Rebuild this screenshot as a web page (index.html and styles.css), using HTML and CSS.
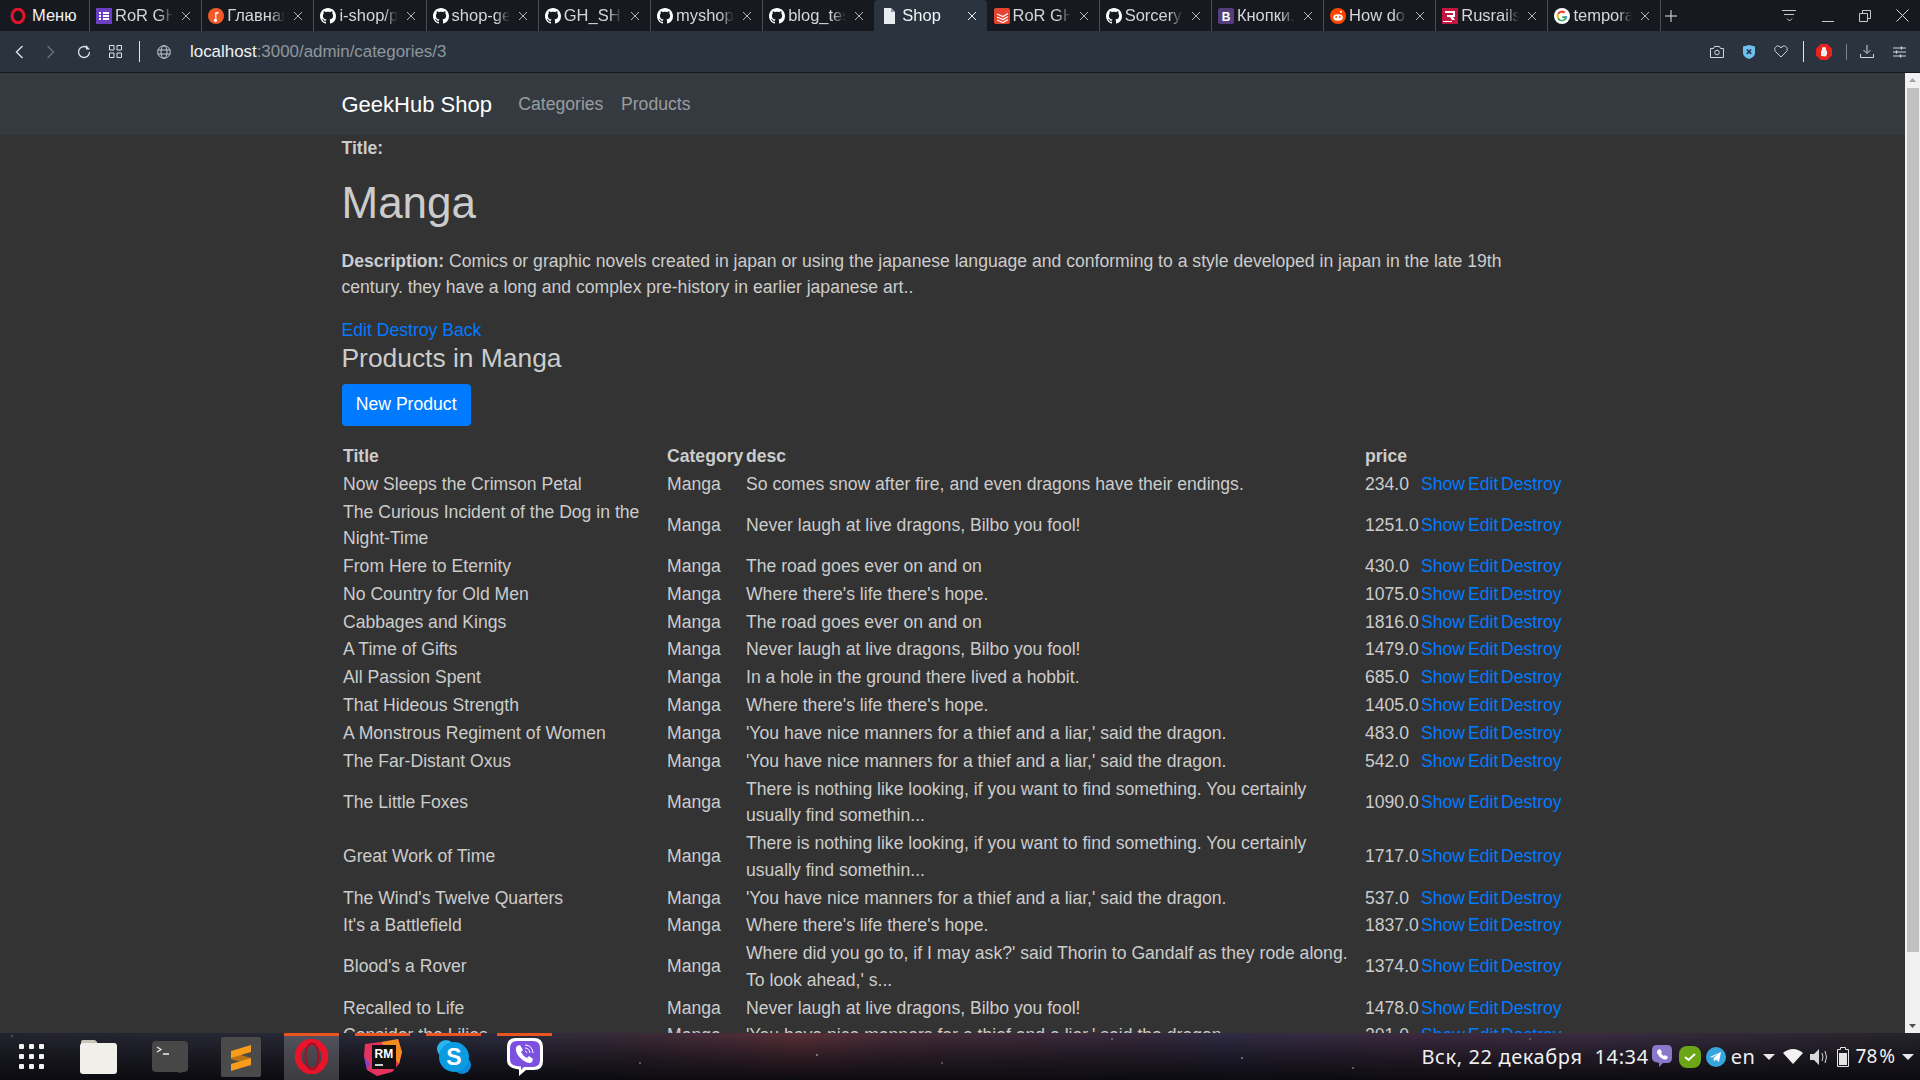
FILE: index.html
```html
<!DOCTYPE html>
<html lang="ru">
<head>
<meta charset="utf-8"/>
<title>Shop</title>
<link rel="stylesheet" href="styles.css">
</head>
<body>
<svg class="defs" width="0" height="0">
  <symbol id="gh" viewBox="0 0 16 16"><path fill="#fff" d="M8 0C3.58 0 0 3.58 0 8c0 3.54 2.29 6.53 5.47 7.59.4.07.55-.17.55-.38 0-.19-.01-.82-.01-1.49-2.01.37-2.53-.49-2.69-.94-.09-.23-.48-.94-.82-1.13-.28-.15-.68-.52-.01-.53.63-.01 1.08.58 1.23.82.72 1.21 1.87.87 2.33.66.07-.52.28-.87.51-1.07-1.78-.2-3.64-.89-3.64-3.95 0-.87.31-1.59.82-2.15-.08-.2-.36-1.02.08-2.12 0 0 .67-.21 2.2.82.64-.18 1.32-.27 2-.27s1.36.09 2 .27c1.53-1.04 2.2-.82 2.2-.82.44 1.1.16 1.92.08 2.12.51.56.82 1.27.82 2.15 0 3.07-1.87 3.75-3.65 3.95.29.25.54.73.54 1.48 0 1.07-.01 1.93-.01 2.2 0 .21.15.46.55.38A8.01 8.01 0 0 0 16 8c0-4.42-3.58-8-8-8z"/></symbol>
  <symbol id="x" viewBox="0 0 10 10"><path d="M1 1l8 8M9 1l-8 8" stroke="currentColor" stroke-width="1" fill="none"/></symbol>
</svg>

<!-- вкладки -->
<div class="tabbar">
  <div class="menu">
    <svg width="16" height="16" viewBox="0 0 16 16"><ellipse cx="8" cy="8" rx="6" ry="6.800" fill="none" stroke="#e0142a" stroke-width="3"/></svg>
    <span>Меню</span>
  </div>
  <div class="tab">
    <svg class="fav" viewBox="0 0 16 16"><rect width="16" height="16" fill="#6b3fc0"/><path d="M3 4h2v2H3zM7 4h6v2H7zM3 7h2v2H3zM7 7h6v2H7zM3 10h2v2H3zM7 10h6v2H7z" fill="#fff"/></svg>
    <span class="tab-text">RoR GH</span><svg class="close"><use href="#x"/></svg>
  </div>
  <div class="tab">
    <svg class="fav" viewBox="0 0 16 16"><circle cx="8" cy="8" r="8" fill="#f4592a"/><path d="M7.200 11V4.500l3.300-.7v1.700L8.400 6v5.200A1.700 1.400 0 1 1 7.200 11z" fill="#fff"/></svg>
    <span class="tab-text">Главная</span><svg class="close"><use href="#x"/></svg>
  </div>
  <div class="tab"><svg class="fav"><use href="#gh"/></svg><span class="tab-text">i-shop/p</span><svg class="close"><use href="#x"/></svg></div>
  <div class="tab"><svg class="fav"><use href="#gh"/></svg><span class="tab-text">shop-ge</span><svg class="close"><use href="#x"/></svg></div>
  <div class="tab"><svg class="fav"><use href="#gh"/></svg><span class="tab-text">GH_SH</span><svg class="close"><use href="#x"/></svg></div>
  <div class="tab"><svg class="fav"><use href="#gh"/></svg><span class="tab-text">myshop</span><svg class="close"><use href="#x"/></svg></div>
  <div class="tab"><svg class="fav"><use href="#gh"/></svg><span class="tab-text">blog_tes</span><svg class="close"><use href="#x"/></svg></div>
  <div class="tab active">
    <svg class="fav" viewBox="0 0 16 16"><path d="M3 0h7l4 4v12H3z" fill="#e8edf2"/><path d="M10 0v4h4z" fill="#8b97a3"/></svg>
    <span class="tab-text">Shop</span><svg class="close"><use href="#x"/></svg>
  </div>
  <div class="tab">
    <svg class="fav" viewBox="0 0 16 16"><rect width="16" height="16" rx="2" fill="#e44332"/><path d="M3 6l6 2.500 5-3M3 9l6 2.500 5-3M3 12l6 2.500 5-3" stroke="#fff" stroke-width="1.200" fill="none"/></svg>
    <span class="tab-text">RoR GH</span><svg class="close"><use href="#x"/></svg>
  </div>
  <div class="tab"><svg class="fav"><use href="#gh"/></svg><span class="tab-text">Sorcery</span><svg class="close"><use href="#x"/></svg></div>
  <div class="tab">
    <svg class="fav" viewBox="0 0 16 16"><rect width="16" height="16" rx="2" fill="#563d7c"/><text x="8" y="12.500" font-size="12" font-weight="700" font-family="Liberation Sans" text-anchor="middle" fill="#fff">B</text></svg>
    <span class="tab-text">Кнопки.</span><svg class="close"><use href="#x"/></svg>
  </div>
  <div class="tab">
    <svg class="fav" viewBox="0 0 16 16"><circle cx="8" cy="8" r="8" fill="#ff4500"/><ellipse cx="8" cy="9.500" rx="4.800" ry="3.300" fill="#fff"/><circle cx="6.200" cy="9" r=".9" fill="#ff4500"/><circle cx="9.800" cy="9" r=".9" fill="#ff4500"/><circle cx="11" cy="3.800" r="1" fill="#fff"/></svg>
    <span class="tab-text">How do</span><svg class="close"><use href="#x"/></svg>
  </div>
  <div class="tab">
    <svg class="fav" viewBox="0 0 16 16"><rect width="16" height="16" fill="#c1173f"/><path d="M3 3h10v6h-2l2 3h-3L8 9H5V7h6V5H3z" fill="#fff"/><path d="M1 13h9v1H1z" fill="#fff"/></svg>
    <span class="tab-text">Rusrails</span><svg class="close"><use href="#x"/></svg>
  </div>
  <div class="tab">
    <svg class="fav" viewBox="0 0 16 16"><circle cx="8" cy="8" r="8" fill="#fff"/><path d="M13 8.200H8.200v1.900H11A3.200 3.200 0 0 1 5 9.400L3.300 10.700A5.200 5.200 0 0 0 13 8.200z" fill="#34a853"/><path d="M5 9.400a3.200 3.200 0 0 1 0-2.800L3.300 5.300a5.200 5.200 0 0 0 0 5.400z" fill="#fbbc05"/><path d="M3.300 5.300L5 6.600a3.200 3.200 0 0 1 5-1.100l1.500-1.400a5.200 5.200 0 0 0-8.200 1.200z" fill="#ea4335"/><path d="M13 8.200h-2l-.6 1.900 1.400 1.300A5.200 5.200 0 0 0 13 8.200z" fill="#4285f4"/></svg>
    <span class="tab-text">temporary</span><svg class="close"><use href="#x"/></svg>
  </div>
  <div class="plus">
    <svg width="12" height="12" viewBox="0 0 12 12"><path d="M6 0v12M0 6h12" stroke="#e6e6e6" stroke-width="1"/></svg>
  </div>
  <div class="win-btns">
    <svg width="15" height="14" viewBox="0 0 15 14"><path d="M0 1.500h14M2 5.500h10M5 9.500l2.500 2.500L10 9.500" stroke="#c8c8c8" fill="none"/></svg>
    <svg width="12" height="14" viewBox="0 0 12 14"><path d="M0 12.500h12" stroke="#c8c8c8"/></svg>
    <svg width="12" height="12" viewBox="0 0 12 12"><path d="M.5 3.500h8v8h-8zM3.500 3.500v-3h8v8h-3" stroke="#c8c8c8" fill="none"/></svg>
    <svg width="13" height="13" viewBox="0 0 13 13"><path d="M.5.500l12 12M12.500.500l-12 12" stroke="#d8d8d8" fill="none"/></svg>
  </div>
</div>

<!-- адресная строка -->
<div class="toolbar">
  <svg class="tool back" width="9" height="14" viewBox="0 0 9 14"><path d="M7.500 1L1.500 7l6 6" stroke="#dfe3e6" stroke-width="1.400" fill="none"/></svg>
  <svg class="tool forward" width="9" height="14" viewBox="0 0 9 14"><path d="M1.500 1l6 6-6 6" stroke="#69727a" stroke-width="1.400" fill="none"/></svg>
  <svg class="tool reload" width="14" height="14" viewBox="0 0 14 14"><path d="M12.500 7A5.500 5.500 0 1 1 10 2.400" stroke="#dfe3e6" stroke-width="1.300" fill="none"/><path d="M9 0v4.500h4z" fill="#dfe3e6"/></svg>
  <svg class="tool grid" width="13" height="13" viewBox="0 0 13 13"><path d="M.5.500h4.500v4.500H.5zM8 .500h4.500v4.500H8zM.5 8h4.500v4.500H.5zM8 8h4.500v4.500H8z" stroke="#dfe3e6" fill="none"/></svg>
  <span class="tool-sep"></span>
  <svg class="tool globe" width="14" height="14" viewBox="0 0 14 14"><g stroke="#c6ccd1" fill="none"><circle cx="7" cy="7" r="6.300"/><ellipse cx="7" cy="7" rx="3" ry="6.300"/><path d="M1 5h12M1 9h12"/></g></svg>
  <div class="url"><span class="host">localhost</span>:3000/admin/categories/3</div>
  <div class="tool-right">
    <svg class="r-camera" width="14" height="12" viewBox="0 0 14 12"><path d="M.5 2.500h3l1-2h5l1 2h3v9H.5z" stroke="#d0d5d9" fill="none"/><circle cx="7" cy="6.500" r="2.300" stroke="#d0d5d9" fill="none"/></svg>
    <svg class="r-shield" width="12" height="14" viewBox="0 0 12 14"><path d="M0 1.500L6 0l6 1.500V8c0 3-3 5-6 6-3-1-6-3-6-6z" fill="#6ec1ef"/><path d="M3.800 4.500l4.400 4.400M8.200 4.500L3.800 8.900" stroke="#1f3446" stroke-width="1.500"/></svg>
    <svg class="r-heart" width="14" height="13" viewBox="0 0 14 13"><path d="M7 12L1.500 6.500C-.5 3.500 2 .5 4.500 1 5.800 1.200 6.500 2 7 3c.5-1 1.200-1.800 2.500-2C12 .5 14.500 3.500 12.500 6.500z" stroke="#d0d5d9" fill="none"/></svg>
    <span class="tool-sep tall"></span>
    <svg class="r-stop" width="16" height="16" viewBox="0 0 16 16"><path d="M4.700 0h6.600L16 4.700v6.600L11.300 16H4.700L0 11.300V4.700z" fill="#e8231e"/><path d="M5 12V6.500l1 0V3.500h1.200V3h1.600v.5H10v3l1 .3V10l-1 2.500z" fill="#eee"/></svg>
    <span class="tool-sep short"></span>
    <svg class="r-down" width="14" height="13" viewBox="0 0 14 13"><path d="M7 0v8M3.500 5L7 8.500 10.500 5M.5 9v3.500h13V9" stroke="#d0d5d9" fill="none"/></svg>
    <svg class="r-sliders" width="13" height="12" viewBox="0 0 13 12"><path d="M0 2h13M0 6h13M0 10h13" stroke="#d0d5d9"/><path d="M8.500 .5v3M3.500 4.500v3M7.500 8.500v3" stroke="#d0d5d9" stroke-width="1.400"/></svg>
  </div>
</div>

<!-- страница -->
<div class="viewport">
  <div class="page">
    <nav class="navbar">
      <div class="nav-inner">
        <a class="brand" href="#">GeekHub Shop</a>
        <a class="nav-link" href="#">Categories</a>
        <a class="nav-link" href="#">Products</a>
      </div>
    </nav>
    <main class="container">
      <p class="field"><strong>Title:</strong></p>
      <h1>Manga</h1>
      <p class="descr"><strong>Description:</strong> Comics or graphic novels created in japan or using the japanese language and conforming to a style developed in japan in the late 19th century. they have a long and complex pre-history in earlier japanese art..</p>
      <div class="links"><a href="#">Edit</a> <a href="#">Destroy</a> <a href="#">Back</a></div>
      <h2>Products in Manga</h2>
      <a class="btn" href="#">New Product</a>
      <table class="products">
        <colgroup><col class="c-title"><col class="c-cat"><col class="c-desc"><col class="c-price"><col class="c-show"><col class="c-edit"><col class="c-destroy"></colgroup>
        <thead><tr><th>Title</th><th>Category</th><th>desc</th><th>price</th><th></th><th></th><th></th></tr></thead>
        <tbody>
          <tr><td>Now Sleeps the Crimson Petal</td><td>Manga</td><td>So comes snow after fire, and even dragons have their endings.</td><td>234.0</td><td><a href="#">Show</a></td><td><a href="#">Edit</a></td><td><a href="#">Destroy</a></td></tr>
          <tr><td>The Curious Incident of the Dog in the Night-Time</td><td>Manga</td><td>Never laugh at live dragons, Bilbo you fool!</td><td>1251.0</td><td><a href="#">Show</a></td><td><a href="#">Edit</a></td><td><a href="#">Destroy</a></td></tr>
          <tr><td>From Here to Eternity</td><td>Manga</td><td>The road goes ever on and on</td><td>430.0</td><td><a href="#">Show</a></td><td><a href="#">Edit</a></td><td><a href="#">Destroy</a></td></tr>
          <tr><td>No Country for Old Men</td><td>Manga</td><td>Where there's life there's hope.</td><td>1075.0</td><td><a href="#">Show</a></td><td><a href="#">Edit</a></td><td><a href="#">Destroy</a></td></tr>
          <tr><td>Cabbages and Kings</td><td>Manga</td><td>The road goes ever on and on</td><td>1816.0</td><td><a href="#">Show</a></td><td><a href="#">Edit</a></td><td><a href="#">Destroy</a></td></tr>
          <tr><td>A Time of Gifts</td><td>Manga</td><td>Never laugh at live dragons, Bilbo you fool!</td><td>1479.0</td><td><a href="#">Show</a></td><td><a href="#">Edit</a></td><td><a href="#">Destroy</a></td></tr>
          <tr><td>All Passion Spent</td><td>Manga</td><td>In a hole in the ground there lived a hobbit.</td><td>685.0</td><td><a href="#">Show</a></td><td><a href="#">Edit</a></td><td><a href="#">Destroy</a></td></tr>
          <tr><td>That Hideous Strength</td><td>Manga</td><td>Where there's life there's hope.</td><td>1405.0</td><td><a href="#">Show</a></td><td><a href="#">Edit</a></td><td><a href="#">Destroy</a></td></tr>
          <tr><td>A Monstrous Regiment of Women</td><td>Manga</td><td>'You have nice manners for a thief and a liar,' said the dragon.</td><td>483.0</td><td><a href="#">Show</a></td><td><a href="#">Edit</a></td><td><a href="#">Destroy</a></td></tr>
          <tr><td>The Far-Distant Oxus</td><td>Manga</td><td>'You have nice manners for a thief and a liar,' said the dragon.</td><td>542.0</td><td><a href="#">Show</a></td><td><a href="#">Edit</a></td><td><a href="#">Destroy</a></td></tr>
          <tr><td>The Little Foxes</td><td>Manga</td><td>There is nothing like looking, if you want to find something. You certainly usually find somethin...</td><td>1090.0</td><td><a href="#">Show</a></td><td><a href="#">Edit</a></td><td><a href="#">Destroy</a></td></tr>
          <tr><td>Great Work of Time</td><td>Manga</td><td>There is nothing like looking, if you want to find something. You certainly usually find somethin...</td><td>1717.0</td><td><a href="#">Show</a></td><td><a href="#">Edit</a></td><td><a href="#">Destroy</a></td></tr>
          <tr><td>The Wind's Twelve Quarters</td><td>Manga</td><td>'You have nice manners for a thief and a liar,' said the dragon.</td><td>537.0</td><td><a href="#">Show</a></td><td><a href="#">Edit</a></td><td><a href="#">Destroy</a></td></tr>
          <tr><td>It's a Battlefield</td><td>Manga</td><td>Where there's life there's hope.</td><td>1837.0</td><td><a href="#">Show</a></td><td><a href="#">Edit</a></td><td><a href="#">Destroy</a></td></tr>
          <tr><td>Blood's a Rover</td><td>Manga</td><td>Where did you go to, if I may ask?' said Thorin to Gandalf as they rode along. To look ahead,' s...</td><td>1374.0</td><td><a href="#">Show</a></td><td><a href="#">Edit</a></td><td><a href="#">Destroy</a></td></tr>
          <tr><td>Recalled to Life</td><td>Manga</td><td>Never laugh at live dragons, Bilbo you fool!</td><td>1478.0</td><td><a href="#">Show</a></td><td><a href="#">Edit</a></td><td><a href="#">Destroy</a></td></tr>
          <tr><td>Consider the Lilies</td><td>Manga</td><td>'You have nice manners for a thief and a liar,' said the dragon.</td><td>201.0</td><td><a href="#">Show</a></td><td><a href="#">Edit</a></td><td><a href="#">Destroy</a></td></tr>
        </tbody>
      </table>
    </main>
  </div>
  <div class="scrollbar">
    <svg class="sb-arrow" width="15" height="15" viewBox="0 0 15 15"><path d="M4 9l3.500-4L11 9z" fill="#a3a3a3"/></svg>
    <div class="sb-thumb"></div>
    <svg class="sb-arrow sb-end" width="15" height="15" viewBox="0 0 15 15"><path d="M4 6l3.500 4L11 6z" fill="#505050"/></svg>
  </div>
</div>

<!-- панель задач -->
<div class="taskbar">
  <div class="dock">
    <div class="dock-item apps">
      <svg width="25" height="25" viewBox="0 0 25 25"><g fill="#f2f2f2"><rect x="0" y="0" width="5" height="5" rx="1"/><rect x="10" y="0" width="5" height="5" rx="1"/><rect x="20" y="0" width="5" height="5" rx="1"/><rect x="0" y="10" width="5" height="5" rx="1"/><rect x="10" y="10" width="5" height="5" rx="1"/><rect x="20" y="10" width="5" height="5" rx="1"/><rect x="0" y="20" width="5" height="5" rx="1"/><rect x="10" y="20" width="5" height="5" rx="1"/><rect x="20" y="20" width="5" height="5" rx="1"/></g></svg>
    </div>
    <div class="dock-item">
      <svg width="37" height="35" viewBox="0 0 37 35"><path d="M1 3q0-2 2-2h11q2 0 3 2l1 2H1z" fill="#c9c5b8"/><rect x="0" y="4" width="37" height="31" rx="3" fill="#f1efe9"/></svg>
    </div>
    <div class="dock-item">
      <svg width="36" height="31" viewBox="0 0 36 31"><rect width="36" height="31" rx="4" fill="#474747"/><path d="M5 6l4 2.500-4 2.500" stroke="#eee" stroke-width="1.200" fill="none"/><path d="M11 13h6" stroke="#eee" stroke-width="1.500"/></svg>
    </div>
    <div class="dock-item">
      <svg width="40" height="40" viewBox="0 0 40 40"><rect width="40" height="40" rx="2" fill="#4a4a4a"/><path d="M10 15l20 6v7L10 22z" fill="#b97415"/><path d="M30 8v7L10 21v-7z" fill="#f89c1c"/><path d="M30 21v7L10 34v-7z" fill="#f89c1c"/></svg>
    </div>
    <div class="dock-item running active">
      <svg width="35" height="35" viewBox="0 0 35 35"><ellipse cx="17.500" cy="17.500" rx="13.500" ry="14.500" fill="none" stroke="#e8142b" stroke-width="6.500"/><ellipse cx="18" cy="17.500" rx="6.500" ry="13" fill="none" stroke="#a90f22" stroke-width="2"/></svg>
    </div>
    <div class="dock-item running">
      <svg width="38" height="38" viewBox="0 0 38 38"><path d="M1 6l16-2 6 3 11-6 4 13-3 12-7 8-15 4-10-6L0 18z" fill="#e6325f"/><path d="M17 4l17-3 4 13-3 12z" fill="#f58a20"/><path d="M0 18l6 8-3 6z" fill="#8a3fc7"/><rect x="8" y="7" width="24" height="24" fill="#111"/><text x="10.500" y="20" font-family="Liberation Sans" font-size="12" font-weight="700" fill="#fff">RM</text><path d="M11 27h8" stroke="#fff" stroke-width="1.600"/></svg>
    </div>
    <div class="dock-item running">
      <svg width="34" height="34" viewBox="0 0 34 34"><circle cx="9" cy="9" r="9" fill="#2bb5ee"/><circle cx="25" cy="25" r="9" fill="#0a8ad8"/><circle cx="17" cy="17" r="15" fill="#0a9be0"/><text x="17" y="25" font-family="Liberation Sans" font-size="23" font-weight="700" text-anchor="middle" fill="#fff">S</text></svg>
    </div>
    <div class="dock-item running">
      <svg width="36" height="38" viewBox="0 0 36 38"><path d="M9 0h18q9 0 9 9v14q0 9-9 9h-8l-7 6v-6.500Q0 30 0 23V9q0-9 9-9z" fill="#fff"/><path d="M10 3h16q7 0 7 7v12q0 7-7 7h-9l-3 3v-3.500Q3 28 3 22V10q0-7 7-7z" fill="#7d51e0"/><path d="M10 8l3-1 3 5-2 2q2 4 6 6l2-2 4 3-1 3q-2 2-6 0-8-4-10-11-1-3 1-5z" fill="#fff"/><path d="M18 7q7 0 8 8M18 10q4 0 5 5M18 13q1 0 2 2" stroke="#fff" fill="none"/></svg>
    </div>
  </div>
  <div class="tray">
    <span class="date">Вск, 22 декабря</span>
    <span class="clock">14:34</span>
    <svg class="t-viber" width="20" height="24" viewBox="0 0 20 24"><path d="M5 0h10q5 0 5 5v8q0 5-5 5h-4l-4 4v-4.200Q0 17 0 13V5q0-5 5-5z" fill="#8a79c8"/><path d="M6 5l2-1 2 3-1 1q1 2 3 3l1-1 3 2-1 2q-2 1-4 0-4-2-6-6-.5-2 1-3z" fill="#fff"/></svg>
    <svg class="t-check" width="22" height="22" viewBox="0 0 22 22"><rect width="22" height="22" rx="8" fill="#6aa616"/><path d="M6 11l3.500 3L16 8" stroke="#fff" stroke-width="2" fill="none"/></svg>
    <svg class="t-tg" width="20" height="20" viewBox="0 0 20 20"><circle cx="10" cy="10" r="10" fill="#37a6de"/><path d="M4 10l11-5-2 10-3-2.500-2 2-.5-3.500 5-4-6.500 3.500z" fill="#fff"/></svg>
    <span class="lang">en</span>
    <span class="caret"></span>
    <svg class="t-wifi" width="20" height="15" viewBox="0 0 20 15"><path d="M0 4q10-8 20 0L10 15z" fill="#f2f2f2"/></svg>
    <svg class="t-sound" width="19" height="16" viewBox="0 0 19 16"><path d="M0 5h4l5-5v16l-5-5H0z" fill="#d8d8d8"/><path d="M12 4q2 4 0 8M15 2q3 6 0 12" stroke="#d8d8d8" fill="none"/></svg>
    <svg class="t-batt" width="12" height="20" viewBox="0 0 12 20"><path d="M3.500 .5h5v2h3v17H.5v-17h3z" stroke="#e5e5e5" fill="none"/><rect x="2" y="6" width="8" height="12" fill="#e5e5e5"/></svg>
    <span class="percent">78 %</span>
    <span class="caret"></span>
  </div>
</div>
</body>
</html>
```

FILE: styles.css
```css
* { box-sizing: border-box; }

html, body {
  margin: 0;
  height: 100%;
  overflow: hidden;
}

body {
  display: flex;
  flex-direction: column;
  font-family: "Liberation Sans", Arial, sans-serif;
  font-size: 17.6px;
  line-height: 1.5;
  background: #333;
}

.defs { position: absolute; }

/* tabs */
.tabbar {
  flex: 0 0 31px;
  display: flex;
  align-items: center;
  background: #16191f;
  color: #d6d6d6;
  font-size: 16.5px;
}

.menu {
  flex: 0 0 89px;
  display: flex;
  align-items: center;
  gap: 6px;
  padding-left: 10px;
  color: #f2f2f2;
}

.tab {
  flex: 0 0 112.2px;
  min-width: 0;
  height: 31px;
  display: flex;
  align-items: center;
  padding: 0 10px 0 6px;
  border-left: 1px solid #4a4d52;
}

.tab .fav { flex: 0 0 16px; width: 16px; height: 16px; margin-right: 3px; }
.tab.active .fav { margin-right: 5px; }

.tab-text {
  flex: 1;
  overflow: hidden;
  white-space: nowrap;
  -webkit-mask-image: linear-gradient(to right, #000 76%, transparent 100%);
  mask-image: linear-gradient(to right, #000 76%, transparent 100%);
}

.close { flex: 0 0 10px; width: 10px; height: 10px; margin-left: 8px; color: #b5b5b5; }

.tab.active {
  border-left-color: transparent;
  background: #2b343e;
  border-radius: 4px 4px 0 0;
  color: #f2f4f6;
}
.tab.active .close { color: #f2f2f2; }
.tab.active + .tab { border-left-color: transparent; }

.plus {
  display: flex;
  align-items: center;
  height: 31px;
  padding-left: 4px;
  border-left: 1px solid #4a4d52;
}

.win-btns {
  margin-left: auto;
  display: flex;
  align-items: center;
  gap: 25px;
  padding-right: 11px;
}

/* address bar */
.toolbar {
  flex: 0 0 42px;
  display: flex;
  align-items: center;
  background: #2b343e;
  border-bottom: 1px solid #14171b;
  color: #8f979e;
  padding-left: 15px;
}

.tool.forward { margin-left: 22px; }
.tool.reload { margin-left: 22px; }
.tool.grid { margin-left: 18px; }
.tool-sep { width: 1px; height: 21px; background: #dfe3e6; margin-left: 17px; }
.tool.globe { margin-left: 17px; }

.url {
  margin-left: 19px;
  font-size: 16.9px;
}
.host { color: #f0f2f4; }

.tool-right {
  margin-left: auto;
  display: flex;
  align-items: center;
  padding-right: 14px;
}
.r-shield { margin-left: 19px; }
.r-heart { margin-left: 19px; }
.tool-sep.tall { margin: 0 0 0 15px; }
.r-stop { margin-left: 12px; }
.tool-sep.short { height: 16px; margin: 0 0 0 14px; background: #7c848b; }
.r-down { margin-left: 13px; }
.r-sliders { margin-left: 19px; }

/* page */
.viewport {
  flex: 1;
  min-height: 0;
  display: flex;
  background: #333;
}

.page {
  flex: 1;
  overflow: hidden;
  color: #ccc;
}

.navbar {
  height: 62px;
  background: #343a40;
  display: flex;
  align-items: center;
}

.nav-inner,
.container {
  width: 1222px;
  margin: 0 auto;
}

.nav-inner {
  display: flex;
  align-items: center;
}

.brand {
  font-size: 22px;
  color: #fff;
  margin-right: 17.6px;
}

.nav-link {
  color: rgba(255, 255, 255, 0.5);
  padding: 0 8.8px;
}

.field {
  margin: 0;
}

h1 {
  font-size: 44px;
  font-weight: 500;
  line-height: 1.2;
  margin: 16px 0 17.4px;
  color: #ccc;
}

.descr {
  margin: 0 0 16.5px;
}

a { color: #007bff; text-decoration: none; }

h2 {
  font-size: 26.4px;
  font-weight: 500;
  line-height: 1.2;
  margin: 0 0 8.8px;
  color: #ccc;
}

.btn {
  display: block;
  width: 129px;
  padding: 7.7px 14.3px;
  border-radius: 4px;
  background: #007bff;
  color: #fff;
  white-space: nowrap;
}

.products {
  table-layout: fixed;
  width: 1224px;
  margin: 16px 0 0 -0.5px;
  border-spacing: 2px 1px;
}

.products th,
.products td {
  padding: 0.25px 0;
  text-align: left;
}

.c-title { width: 322px; }
.c-cat { width: 77px; }
.c-desc { width: 617px; }
.c-price { width: 54px; }
.c-show { width: 45px; }
.c-edit { width: 31px; }
.c-destroy { width: 62px; }

/* scrollbar */
.scrollbar {
  flex: 0 0 15px;
  background: #f1f1f1;
  display: flex;
  flex-direction: column;
}
.sb-thumb {
  height: 864px;
  margin: 0 1px 0 2px;
  background: #c1c1c1;
}
.sb-end { margin-top: auto; }

/* taskbar */
.taskbar {
  flex: 0 0 47px;
  position: relative;
  display: flex;
  align-items: center;
  justify-content: space-between;
  background-color: #131318;
  background-image:
    radial-gradient(circle at 12px 3px, #47586c 0.6px, transparent 1.4px),
    radial-gradient(circle at 640px 30px, #59667a 0.6px, transparent 1.4px),
    radial-gradient(circle at 817px 22px, #6e7484 0.8px, transparent 1.6px),
    radial-gradient(circle at 942px 30px, #6e5642 0.6px, transparent 1.4px),
    radial-gradient(circle at 1112px 6px, #6c7084 0.6px, transparent 1.4px),
    radial-gradient(circle at 1242px 25px, #586c86 0.8px, transparent 1.6px),
    radial-gradient(circle at 1353px 35px, #586c86 0.6px, transparent 1.4px),
    radial-gradient(circle at 180px 38px, #3e4152 1.5px, transparent 2.5px),
    radial-gradient(circle at 1530px 6px, #5e5e6a 0.6px, transparent 1.4px),
    linear-gradient(to bottom, rgba(12, 11, 16, 0) 0, rgba(12, 11, 16, 0.55) 50%, #0c0b10 100%),
    linear-gradient(to right, #23242e 0, #2c2c3e 500px, #3a2a38 640px, #5a3038 800px, #442c38 900px, #36293c 1150px, #2f2c44 1220px, #3c2a3e 1400px, #3a2c40 1600px, #26242c 1920px);
  color: #f0f0f0;
}

.dock {
  display: flex;
  gap: 16px;
  height: 100%;
}

.dock-item {
  flex: 0 0 55px;
  display: flex;
  align-items: center;
  justify-content: center;
  position: relative;
}

.dock-item.apps { padding-left: 7px; }

.dock-item.running::before {
  content: "";
  position: absolute;
  top: 0;
  left: 0;
  right: 0;
  height: 3px;
  background: #e95420;
}

.dock-item.active { background: rgba(255, 255, 255, 0.2); }

.tray {
  display: flex;
  align-items: center;
  font-family: "Noto Sans", sans-serif;
  font-size: 20px;
  letter-spacing: 0.6px;
  padding-right: 6px;
}

.clock { margin-left: 12px; }
.t-viber { margin-left: 3px; }
.t-check { margin-left: 7px; }
.t-tg { margin-left: 5px; }
.lang { margin-left: 5px; }
.caret {
  width: 0;
  height: 0;
  margin-left: 7px;
  border-left: 6px solid transparent;
  border-right: 6px solid transparent;
  border-top: 6px solid #e8e8e8;
}
.t-wifi { margin-left: 8px; }
.t-sound { margin-left: 7px; }
.t-batt { margin-left: 8px; }
.percent { margin-left: 7px; font-size: 19px; word-spacing: -3px; letter-spacing: 0; }
```
